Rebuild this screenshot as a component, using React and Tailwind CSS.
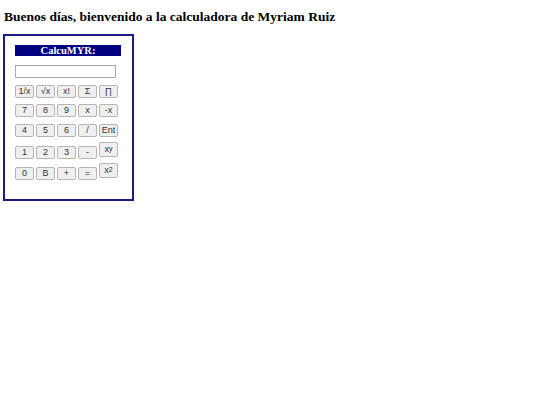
import React from 'react';

// rows of keys, in order; each row gets its own height and top gap
const rows = [
  { cls: 'h-[13px]', keys: ['1/x', '√x', 'x!', 'Σ', '∏'] },
  { cls: 'h-[13px] mt-[6px]', keys: ['7', '8', '9', 'x', '-x'] },
  { cls: 'h-[13px] mt-[7px]', keys: ['4', '5', '6', '/', 'Ent'] },
  { cls: 'h-[18px] mt-[4px]', keys: ['1', '2', '3', '-', 'xy'] },
  { cls: 'h-[18px] mt-[3px]', keys: ['0', 'B', '+', '=', 'x2'] },
];

const Key = ({ label }) => {
  let content = label;
  let tall = false;
  if (label === 'xy' || label === 'x2') {
    tall = true;
    content = (
      <>
        x<sup className="text-[7px] relative -top-[1px]">{label[1]}</sup>
      </>
    );
  }
  return (
    <button
      className={`w-[19px] ${tall ? 'h-[15px] mb-[2px]' : 'h-[13px]'} flex items-center justify-center bg-[#efefef] border border-[#b5b5b5] rounded-[2px] text-[9px] leading-none text-[#333] font-['Liberation_Sans',Arial,sans-serif]`}
    >
      {content}
    </button>
  );
};

function App() {
  return (
    <div className="w-[540px] h-[405px] bg-white">
      <h3 className="pl-[4px] pt-[9px] text-[13.5px] leading-[16px] font-bold text-black font-['Liberation_Serif','Times_New_Roman',serif]">
        Buenos días, bienvenido a la calculadora de Myriam Ruiz
      </h3>
      <div className="ml-[3px] mt-[9px] w-[131px] h-[167px] border-2 border-[#1c1c7e] pl-[10px] pt-[9px]">
        <div className="w-[106px] h-[11px] bg-[#000080] text-white text-[10.5px] leading-[11px] font-bold text-center font-['Liberation_Serif','Times_New_Roman',serif]">
          CalcuMYR:
        </div>
        <div className="mt-[9px] w-[101px] h-[13px] border border-[#a9a9a9] bg-white" />
        <div className="mt-[7px] flex flex-col">
          {rows.map((row, i) => (
            <div key={i} className={`flex items-end gap-[2px] ${row.cls}`}>
              {row.keys.map((k) => (
                <Key key={k} label={k} />
              ))}
            </div>
          ))}
        </div>
      </div>
    </div>
  );
}

export default App;
